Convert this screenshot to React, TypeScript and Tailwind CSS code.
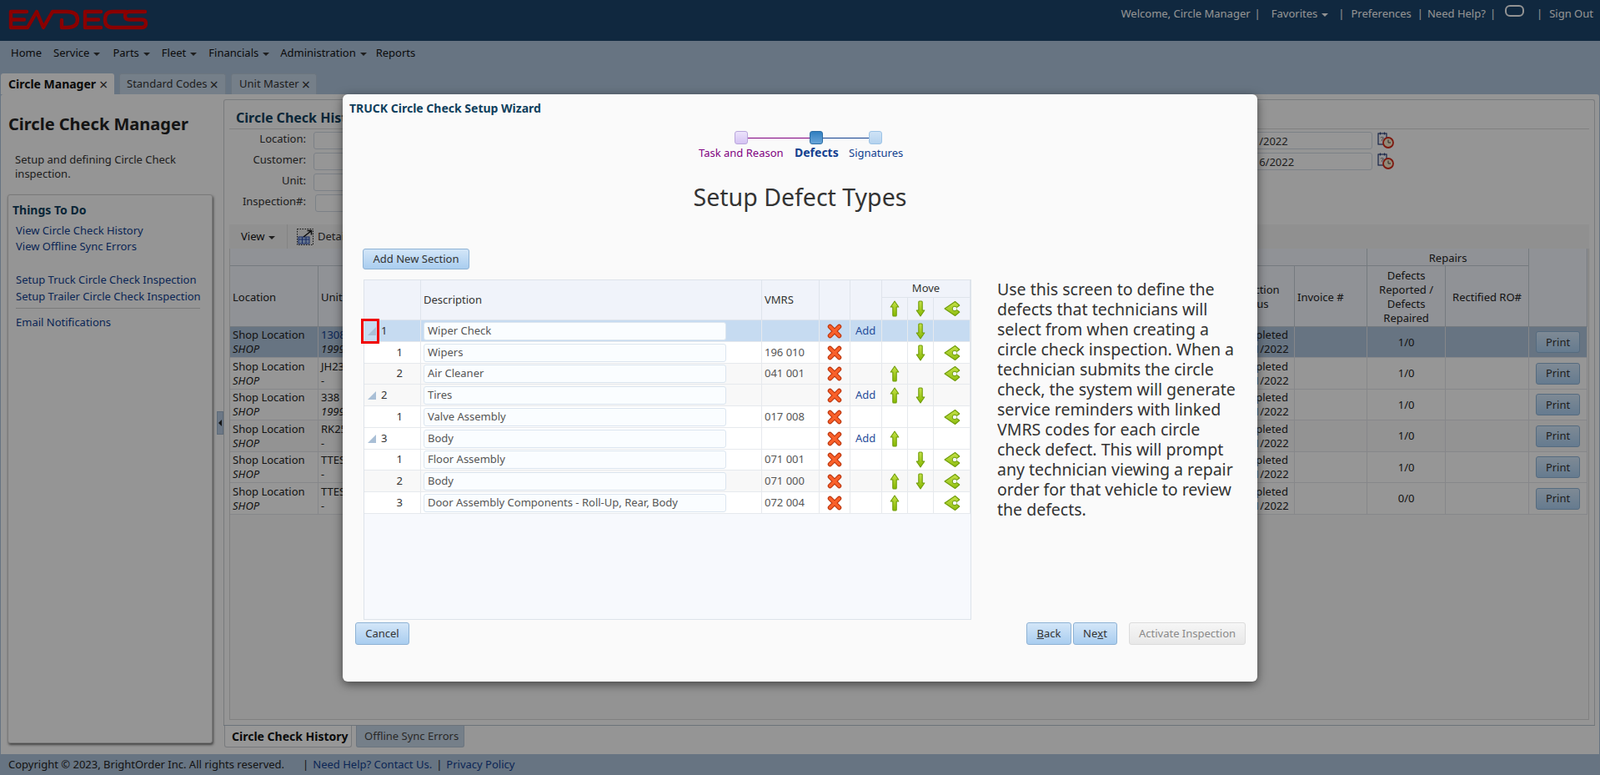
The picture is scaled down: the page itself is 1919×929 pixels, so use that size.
import React from "react";

function Caret({ cls = "border-t-[#555]" }: { cls?: string }) {
  return <span className={`inline-block ml-[5px] w-0 h-0 border-x-[4px] border-x-transparent border-t-[4px] align-middle ${cls}`} />;
}

function Up() {
  return (
    <svg width="12" height="20" viewBox="0 0 12 20" className="block mx-auto">
      <defs>
        <linearGradient id="ga" x1="0" y1="0" x2="0" y2="1">
          <stop offset="0" stopColor="#c6e24a" />
          <stop offset="1" stopColor="#86b800" />
        </linearGradient>
      </defs>
      <path d="M6 1 L10.800 8 H8.200 V18 Q8.200 19 7.200 19 H4.800 Q3.800 19 3.800 18 V8 H1.200 Z" fill="url(#ga)" stroke="#6f9c08" strokeWidth="1.100" strokeLinejoin="round" />
    </svg>
  );
}

function Down() {
  return (
    <svg width="12" height="20" viewBox="0 0 12 20" className="block mx-auto">
      <defs>
        <linearGradient id="gd" x1="0" y1="0" x2="0" y2="1">
          <stop offset="0" stopColor="#c6e24a" />
          <stop offset="1" stopColor="#86b800" />
        </linearGradient>
      </defs>
      <path d="M6 19 L10.800 12 H8.200 V2 Q8.200 1 7.200 1 H4.800 Q3.800 1 3.800 2 V12 H1.200 Z" fill="url(#gd)" stroke="#6f9c08" strokeWidth="1.100" strokeLinejoin="round" />
    </svg>
  );
}

function Share() {
  return (
    <svg width="20" height="20" viewBox="0 0 20 20" className="block mx-auto">
      <defs>
        <linearGradient id="gs" x1="0" y1="0" x2="0" y2="1">
          <stop offset="0" stopColor="#c6e24a" />
          <stop offset="1" stopColor="#8fbe10" />
        </linearGradient>
      </defs>
      <path d="M13.500 1.500 L1 10 L13.500 18.500 L18.800 14 L15.500 11.500 L15.500 8.500 L18.800 6 Z" fill="url(#gs)" stroke="#6f9c08" strokeWidth="1.100" strokeLinejoin="round" />
      <circle cx="13" cy="10" r="2.800" fill="#f4f7fb" stroke="#6f9c08" strokeWidth="1" />
      <path d="M15.500 8.800 L19 8.800 L19 11.200 L15.500 11.200 Z" fill="#f4f7fb" />
    </svg>
  );
}

function RedX() {
  return (
    <svg width="18" height="18" viewBox="0 0 18 18" className="block mx-auto">
      <path d="M3.500 3.500 L14.500 14.500 M14.500 3.500 L3.500 14.500" stroke="#b8330c" strokeWidth="5.500" strokeLinecap="round" />
      <path d="M3.500 3.500 L14.500 14.500 M14.500 3.500 L3.500 14.500" stroke="#f9602a" strokeWidth="3.500" strokeLinecap="round" />
    </svg>
  );
}

function Tri() {
  return (
    <svg width="10" height="10" viewBox="0 0 10 10" className="shrink-0">
      <polygon points="0,10 10,10 10,0" fill="#a9bfd6" />
    </svg>
  );
}

function Calendar() {
  return (
    <svg width="20" height="20" viewBox="0 0 20 20" className="shrink-0">
      <rect x="1" y="2" width="10" height="13" fill="#f4f4f8" stroke="#2a3f78" strokeWidth="1.200" />
      <path d="M3.500 0.500 V3.500 M8.500 0.500 V3.500" stroke="#2a3f78" strokeWidth="1.200" />
      <text x="3.300" y="11" fontSize="8" fill="#333" fontFamily="'Liberation Sans',sans-serif">?</text>
      <circle cx="13" cy="13" r="6" fill="#f5e6c8" stroke="#d02a1a" strokeWidth="1.800" />
      <path d="M13 9.500 V13 H16" stroke="#444" strokeWidth="1" fill="none" />
    </svg>
  );
}

function DetailIcon() {
  return (
    <svg width="20" height="20" viewBox="0 0 20 20" className="shrink-0">
      <rect x="0.500" y="0.500" width="19" height="19" fill="#e8e8e8" stroke="#222" strokeWidth="1" strokeDasharray="1.500 1.500" />
      <rect x="2" y="10" width="13" height="8" fill="#a8c4ee" stroke="#2848a8" />
      <path d="M2 13 H15 M6.500 10 V18 M11 10 V18" stroke="#2848a8" />
      <path d="M8 10 L17 3 M12.500 2.500 H17.500 V7.500" stroke="#111" strokeWidth="1.500" fill="none" />
    </svg>
  );
}

function Logo() {
  return (
    <svg width="180" height="40" viewBox="0 0 180 40" className="block ml-[5px] mt-[5px]">
      <path
        d="M27 9 H8 V28 H27 M8 18.500 H24 M28 28 L39 9 L47 28 L58 9 H75 Q88 9 88 18.500 Q88 28 75 28 H69 V19 M116 9 H97 V28 H116 M97 18.500 H113 M146 9 H130 Q121 9 121 18.500 Q121 28 130 28 H165 Q170 28 170 23 Q170 18.500 165 18.500 H150 Q145 18.500 145 14 Q145 9 150 9 H169"
        fill="none"
        stroke="#e60000"
        strokeWidth="4.400"
        strokeLinejoin="round"
        strokeLinecap="round"
      />
    </svg>
  );
}

const btn =
  "flex items-center justify-center rounded-[3px] border border-[#8eb2d4] bg-gradient-to-b from-[#d3e6f8] to-[#a9cdef] text-[#333] text-[13px]";

type Row = { sec?: number; n?: number; name: string; vmrs: string; add?: boolean; up?: boolean; down?: boolean; share?: boolean; bg: string; h: string };

const rows: Row[] = [
  { sec: 1, name: "Wiper Check", vmrs: "", add: true, down: true, bg: "bg-[#c6dbf1]", h: "h-[26px]" },
  { n: 1, name: "Wipers", vmrs: "196 010", down: true, share: true, bg: "bg-white", h: "h-[26px]" },
  { n: 2, name: "Air Cleaner", vmrs: "041 001", up: true, share: true, bg: "bg-[#f8f8f8]", h: "h-[25px]" },
  { sec: 2, name: "Tires", vmrs: "", add: true, up: true, down: true, bg: "bg-[#f8f8f8]", h: "h-[26px]" },
  { n: 1, name: "Valve Assembly", vmrs: "017 008", share: true, bg: "bg-white", h: "h-[26px]" },
  { sec: 3, name: "Body", vmrs: "", add: true, up: true, bg: "bg-white", h: "h-[26px]" },
  { n: 1, name: "Floor Assembly", vmrs: "071 001", down: true, share: true, bg: "bg-white", h: "h-[25px]" },
  { n: 2, name: "Body", vmrs: "071 000", up: true, down: true, share: true, bg: "bg-[#f8f8f8]", h: "h-[26px]" },
  { n: 3, name: "Door Assembly Components - Roll-Up, Rear, Body", vmrs: "072 004", up: true, share: true, bg: "bg-white", h: "h-[26px]" },
];

const cell = "border-r border-b border-[#e6e9ed] p-0";
const hcell = "border-r border-b border-[#dfe4ec] p-0 font-normal text-[#333]";

function DefectGrid() {
  return (
    <div className="relative w-[729px] h-[408px] border border-[#dde3ea] bg-[#f7f9fd]">
      <table className="table-fixed border-separate border-spacing-0 w-[727px] text-[13px] text-[#444]">
        <colgroup>
          <col className="w-[68px]" />
          <col className="w-[409px]" />
          <col className="w-[69px]" />
          <col className="w-[37px]" />
          <col className="w-[38px]" />
          <col className="w-[31px]" />
          <col className="w-[31px]" />
          <col className="w-[44px]" />
        </colgroup>
        <thead className="bg-[#f0f3fa]">
          <tr className="h-[21px]">
            <th rowSpan={2} className={hcell} />
            <th rowSpan={2} className={`${hcell} text-left pl-[3px]`}>Description</th>
            <th rowSpan={2} className={`${hcell} text-left pl-[3px]`}>VMRS</th>
            <th rowSpan={2} className={hcell} />
            <th rowSpan={2} className={hcell} />
            <th colSpan={3} className={`${hcell} text-center`}>Move</th>
          </tr>
          <tr className="h-[27px]">
            <th className={hcell}><Up /></th>
            <th className={hcell}><Down /></th>
            <th className={hcell}><Share /></th>
          </tr>
        </thead>
        <tbody>
          {rows.map((r, i) => (
            <tr key={i} className={`${r.h} ${r.bg}`}>
              <td className={cell}>
                {r.sec ? (
                  <div className="flex items-center pl-[4px]">
                    <Tri />
                    <span className="ml-[6px] text-[#333]">{r.sec}</span>
                  </div>
                ) : (
                  <div className="text-right pr-[21px] text-[#333]">{r.n}</div>
                )}
              </td>
              <td className={cell}>
                <div className="ml-[3px] w-[363px] h-[22px] flex items-center pl-[4px] rounded-[3px] border border-[#dbe5ef] bg-[#fafdff] text-[#555] overflow-hidden whitespace-nowrap">
                  {r.name}
                </div>
              </td>
              <td className={`${cell} pl-[3px] text-[#555]`}>{r.vmrs}</td>
              <td className={cell}><RedX /></td>
              <td className={`${cell} pl-[6px] text-[#1f4b99]`}>{r.add ? "Add" : ""}</td>
              <td className={cell}>{r.up ? <Up /> : null}</td>
              <td className={cell}>{r.down ? <Down /> : null}</td>
              <td className={cell}>{r.share ? <Share /> : null}</td>
            </tr>
          ))}
        </tbody>
      </table>
      <div className="absolute left-[-4px] top-[46px] w-[22px] h-[30px] border-[3px] border-[#f00000]" />
    </div>
  );
}

function Modal() {
  return (
    <div className="absolute left-[411px] top-[113px] w-[1097px] h-[704px] rounded-[6px] bg-[#fafafa] shadow-[0_3px_12px_rgba(0,0,0,0.55)] z-20">
      <div className="pt-[9px] pl-[8px] h-[25px] leading-[16px] text-[14px] font-bold text-[#0f3f5c] whitespace-nowrap">TRUCK Circle Check Setup Wizard</div>
      <div className="flex items-center ml-[470px] mt-[19px] h-[16px]">
        <div className="w-[16px] h-[16px] rounded-[3px] border border-[#b9a6dc] bg-gradient-to-b from-[#ece3fb] to-[#d5c3f3]" />
        <div className="w-[74px] h-px bg-[#800080]" />
        <div className="w-[16px] h-[16px] rounded-[3px] border border-[#2c6ca3] bg-gradient-to-b from-[#2f7fc0] to-[#69a5d8]" />
        <div className="w-[55px] h-px bg-[#123f8f]" />
        <div className="w-[16px] h-[16px] rounded-[3px] border border-[#9cc3e6] bg-gradient-to-b from-[#cfe3f6] to-[#b5d3ef]" />
      </div>
      <div className="flex ml-[427px] mt-[2px] h-[16px] leading-[16px] text-[13px] whitespace-nowrap">
        <span className="w-[115px] text-[#800080]">Task and Reason</span>
        <span className="w-[65px] text-[14px] font-bold text-[#123f8f]">Defects</span>
        <span className="text-[#123f8f]">Signatures</span>
      </div>
      <div className="mt-[25px] h-[40px] leading-[40px] text-center text-[28.5px] text-[#333]">Setup Defect Types</div>
      <div className={`${btn} ml-[24px] mt-[42px] w-[128px] h-[25px]`}>Add New Section</div>
      <div className="flex mt-[12px] ml-[25px] items-start">
        <DefectGrid />
        <p className="ml-[31px] whitespace-nowrap text-[19.5px] leading-[24px] text-[#333]">
          Use this screen to define the<br />
          defects that technicians will<br />
          select from when creating a<br />
          circle check inspection. When a<br />
          technician submits the circle<br />
          check, the system will generate<br />
          service reminders with linked<br />
          VMRS codes for each circle<br />
          check defect. This will prompt<br />
          any technician viewing a repair<br />
          order for that vehicle to review<br />
          the defects.
        </p>
      </div>
      <div className="flex mt-[3px] pl-[15px] pr-[14px] h-[27px]">
        <div className={`${btn} w-[65px]`}>Cancel</div>
        <div className="flex-1" />
        <div className={`${btn} w-[54px]`}><u>B</u>ack</div>
        <div className={`${btn} w-[53px] ml-[2px]`}>Ne<u>x</u>t</div>
        <div className="flex items-center justify-center w-[140px] ml-[14px] rounded-[3px] border border-[#dcdcdc] bg-gradient-to-b from-[#f6f6f6] to-[#e8e8e8] text-[#8a8a8a] text-[13px]">Activate Inspection</div>
      </div>
    </div>
  );
}

const histRows = [
  ["1308", "1999", "11/1/2022", "1/0"],
  ["JH23", "-", "11/1/2022", "1/0"],
  ["338", "1999", "11/1/2022", "1/0"],
  ["RK25", "-", "11/1/2022", "1/0"],
  ["TTES", "-", "11/1/2022", "1/0"],
  ["TTES", "-", "11/1/2022", "0/0"],
];
const histH = ["h-[37px]", "h-[38px]", "h-[37px]", "h-[38px]", "h-[37px]", "h-[38px]"];
const hb = "border-r border-b border-[#c4ccd4] p-0 font-normal leading-[17px]";
const bb = "border-r border-b border-[#dfe2e6] p-0";

function History() {
  return (
    <table className="table-fixed border-separate border-spacing-0 w-[1628px] text-[13px] text-[#222]">
      <colgroup>
        <col className="w-[106px]" />
        <col className="w-[100px]" />
        <col className="w-[971px]" />
        <col className="w-[100px]" />
        <col className="w-[87px]" />
        <col className="w-[94px]" />
        <col className="w-[100px]" />
        <col className="w-[70px]" />
      </colgroup>
      <thead className="bg-[#f0f3fa]">
        <tr className="h-[21px]">
          <th colSpan={5} className={hb} />
          <th colSpan={2} className={`${hb} pt-[2px] text-center`}>Repairs</th>
          <th rowSpan={2} className={hb} />
        </tr>
        <tr className="h-[73px]">
          <th className={`${hb} pt-[2px] text-left pl-[3px]`}>Location</th>
          <th className={`${hb} pt-[2px] text-left pl-[3px]`}>Unit</th>
          <th className={hb} />
          <th className={`${hb} pt-[2px] text-center`}>Inspection<br />Status</th>
          <th className={`${hb} pt-[2px] text-left pl-[3px]`}>Invoice #</th>
          <th className={`${hb} pt-[2px] text-center`}>Defects<br />Reported /<br />Defects<br />Repaired</th>
          <th className={`${hb} pt-[2px] text-center`}>Rectified RO#</th>
        </tr>
      </thead>
      <tbody className="leading-[17px]">
        {histRows.map((r, i) => (
          <tr key={i} className={`${histH[i]} ${i === 0 ? "bg-[#acc1d9]" : i === 3 ? "bg-[#f6f6f6]" : "bg-[#fbfbfb]"}`}>
            <td className={`${bb} pl-[3px]`}>
              <div>Shop Location</div>
              <div className="italic">SHOP</div>
            </td>
            <td className={`${bb} pl-[3px]`}>
              <div className={i === 0 ? "text-[#123f8f]" : ""}>{r[0]}</div>
              <div className="italic">{r[1]}</div>
            </td>
            <td className={bb} />
            <td className={`${bb} whitespace-nowrap`}>
              <div className="pl-[25px]">Completed</div>
              <div className="pl-[31px]">{r[2]}</div>
            </td>
            <td className={bb} />
            <td className={`${bb} text-center`}>{r[3]}</td>
            <td className={bb} />
            <td className={bb}>
              <div className={`${btn} w-[53px] h-[26px] ml-[8px]`}>Print</div>
            </td>
          </tr>
        ))}
      </tbody>
    </table>
  );
}

function Field({ label, ml = "ml-[9px]" }: { label: string; ml?: string }) {
  return (
    <div className="flex items-center h-[25px]">
      <div className="w-[92px] -mt-[4px] text-right text-[#333]">{label}</div>
      <div className={`${ml} w-[220px] h-[21px] rounded-[3px] border border-[#cfd8e2] bg-[#fbfbfb]`} />
    </div>
  );
}

function DateField({ value }: { value: string }) {
  return (
    <div className="flex items-center h-[25px]">
      <div className="w-[244px] h-[21px] rounded-[3px] border border-[#cfd8e2] bg-[#fbfbfb] pl-[80px] leading-[21px] text-[#333] whitespace-nowrap">{value}</div>
      <div className="ml-[6px] -mt-[2px]"><Calendar /></div>
    </div>
  );
}

export default function App() {
  return (
    <div className="relative w-[1919px] h-[929px] overflow-hidden flex flex-col bg-[#acc1d9] text-[13px] text-[#222] [font-family:'DejaVu_Sans_Condensed','DejaVu_Sans',sans-serif] [font-stretch:condensed]">
      <header className="h-[49px] bg-[#1b436a] flex justify-between shrink-0">
        <Logo />
        <div className="flex items-start pt-[8px] pr-[8px] text-[13px] text-[#f5f5f5] leading-[16px] whitespace-nowrap">
          <span>Welcome, Circle Manager</span>
          <span className="ml-[5px] mr-[5px]">|</span>
          <span className="ml-[8px]">Favorites<Caret cls="border-t-[#f5f5f5]" /></span>
          <span className="ml-[12px] mr-[8px]">|</span>
          <span>Preferences</span>
          <span className="ml-[7px] mr-[5px]">|</span>
          <span>Need Help?</span>
          <span className="ml-[5px] mr-[3px]">|</span>
          <span className="ml-[8px] mt-[-2px] w-[23px] h-[14px] rounded-[6px] border-2 border-[#f5f5f5]" />
          <span className="ml-[15px] mr-[8px]">|</span>
          <span>Sign Out</span>
        </div>
      </header>
      <nav className="h-[64px] shrink-0 flex flex-col">
        <div className="flex items-center h-[28px] mt-[1px] pl-[13px] text-[#111] text-[13px] whitespace-nowrap">
          <span className="mr-[14px]">Home</span>
          <span className="mr-[15px]">Service<Caret cls="border-t-[#333]" /></span>
          <span className="mr-[14px]">Parts<Caret cls="border-t-[#333]" /></span>
          <span className="mr-[14px]">Fleet<Caret cls="border-t-[#333]" /></span>
          <span className="mr-[13px]">Financials<Caret cls="border-t-[#333]" /></span>
          <span className="mr-[11px]">Administration<Caret cls="border-t-[#333]" /></span>
          <span>Reports</span>
        </div>
        <div className="flex items-end mt-auto pl-[1px] gap-[6px] h-[26px]">
          <div className="h-[25px] w-[136px] rounded-t-[3px] bg-[#f8f8f8] pl-[9px] text-[14px] font-bold text-[#111] flex items-center whitespace-nowrap">
            Circle Manager<span className="ml-[4px] font-normal text-[18px] leading-none text-[#333]">×</span>
          </div>
          <div className="h-[25px] w-[128px] rounded-t-[3px] bg-[#c4d4e4] pl-[8px] text-[#333] flex items-center border border-b-0 border-[#b3c3d4] whitespace-nowrap">
            Standard Codes<span className="ml-[3px] text-[18px] leading-none">×</span>
          </div>
          <div className="h-[25px] w-[103px] rounded-t-[3px] bg-[#c4d4e4] pl-[9px] text-[#333] flex items-center border border-b-0 border-[#b3c3d4] whitespace-nowrap">
            Unit Master<span className="ml-[3px] text-[18px] leading-none">×</span>
          </div>
        </div>
      </nav>
      <main className="flex flex-1 min-h-0 bg-[#f8f8f8] rounded-t-[3px] mx-[1px]">
        <aside className="w-[259px] -ml-[1px] shrink-0 flex flex-col mr-[1px]">
          <h1 className="ml-[10px] mt-[22px] h-[28px] leading-[28px] text-[20px] font-bold text-[#222] whitespace-nowrap">Circle Check Manager</h1>
          <p className="ml-[18px] mt-[20px] w-[210px] leading-[17px] text-[#333]">Setup and defining Circle Check inspection.</p>
          <div className="ml-[9px] mt-[16px] mb-[13px] w-[246px] flex-1 rounded-[3px] border border-[#ccc] bg-[#f8f8f8] shadow-[1px_2px_3px_rgba(0,0,0,0.55)] pl-[5px] pt-[10px]">
            <div className="text-[14px] font-bold leading-[16px] text-[#0f3f5c]">Things To Do</div>
            <div className="ml-[4px] mt-[7px] w-[221px] text-[#123f8f] leading-[19px] whitespace-nowrap">
              <div>View Circle Check History</div>
              <div>View Offline Sync Errors</div>
              <div className="mt-[20px] leading-[20px]">Setup Truck Circle Check Inspection</div>
              <div className="leading-[20px]">Setup Trailer Circle Check Inspection</div>
              <div className="mt-[4px] border-t border-[#ccc] pt-[7px]">Email Notifications</div>
            </div>
          </div>
        </aside>
        <div className="w-[8px] shrink-0 flex items-start">
          <div className="mt-[380px] w-[8px] h-[28px] bg-[#b4c9e0] border border-[#9db3ca] flex items-center justify-center">
            <span className="w-0 h-0 border-y-[4px] border-y-transparent border-r-[4px] border-r-[#222]" />
          </div>
        </div>
        <section className="w-[1645px] shrink-0 flex flex-col">
          <div className="mt-[6px] h-[751px] rounded-t-[3px] border border-b-0 border-[#c9ccd0] px-[6px] flex flex-col">
            <div className="pt-[13px] pl-[8px] h-[35px] leading-[16px] text-[16px] font-bold text-[#0f3f5c] border-b border-[#d6d6d6] whitespace-nowrap">Circle Check History</div>
            <div className="flex pt-[1px]">
              <div className="flex flex-col">
                <Field label="Location:" />
                <Field label="Customer:" />
                <Field label="Unit:" />
                <Field label="Inspection#:" ml="ml-[11px]" />
              </div>
              <div className="ml-[804px] flex flex-col">
                <DateField value="10/1/2022" />
                <DateField value="10/16/2022" />
              </div>
            </div>
            <div className="mt-[13px] h-[29px] bg-[#f0f0f0] flex items-center whitespace-nowrap">
              <span className="ml-[14px] w-[56px] leading-[29px] border-r border-[#ddd] text-[#111]">View<Caret cls="border-t-[#333]" /></span>
              <span className="ml-[11px]"><DetailIcon /></span>
              <span className="ml-[5px] text-[#333]">Details</span>
            </div>
            <div className="flex-1 border border-t-0 border-[#d6d6d6] bg-[#f5f5f5] mb-[7px] overflow-hidden">
              <History />
            </div>
          </div>
          <div className="flex pl-[1px] border-t border-[#b5c0cc] -mt-[1px]">
            <div className="w-[153px] h-[26px] rounded-b-[3px] border border-t-0 border-[#c9ccd0] bg-[#fcfcfc] pl-[8px] text-[14px] font-bold text-[#111] flex items-center whitespace-nowrap">Circle Check History</div>
            <div className="ml-[5px] w-[130px] h-[26px] rounded-b-[3px] border border-t-0 border-[#b3c3d4] bg-[#c4d4e4] pl-[9px] text-[#444] flex items-center whitespace-nowrap">Offline Sync Errors</div>
          </div>
        </section>
      </main>
      <footer className="h-[25px] shrink-0 flex items-center pl-[10px] text-[#222] whitespace-nowrap">
        <span>Copyright © 2023, BrightOrder Inc. All rights reserved.</span>
        <span className="ml-[22px] mr-[5px]">|</span>
        <span className="text-[#123f8f]">Need Help? Contact Us.</span>
        <span className="mx-[5px]">|</span>
        <span className="text-[#123f8f]">Privacy Policy</span>
      </footer>
      <div className="absolute inset-0 bg-black/40 z-10" />
      <Modal />
    </div>
  );
}
